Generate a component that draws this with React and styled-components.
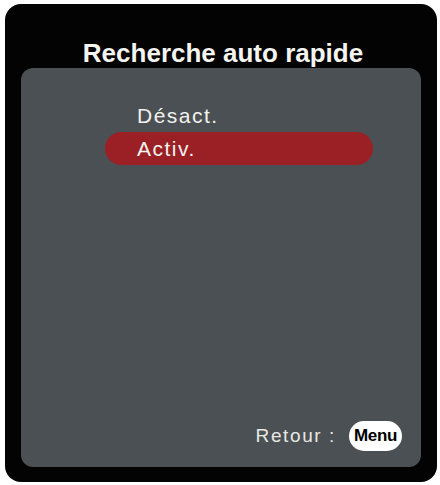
import React from 'react'
import styled, { createGlobalStyle } from 'styled-components'

const GlobalStyle = createGlobalStyle`
  html, body {
    margin: 0;
    padding: 0;
    background: #ffffff;
  }
`

const options = [
  { label: 'Désact.', selected: false },
  { label: 'Activ.', selected: true },
]

const App = () => (
  <>
    <GlobalStyle />
    <Frame>
      <Title>Recherche auto rapide</Title>
      <Panel>
        <OptionList>
          {options.map(o => (
            <Option key={o.label} selected={o.selected}>
              {o.label}
            </Option>
          ))}
        </OptionList>
        <Footer>
          <FooterLabel>Retour :</FooterLabel>
          <MenuKey>Menu</MenuKey>
        </Footer>
      </Panel>
    </Frame>
  </>
)

const Frame = styled.div`
  box-sizing: border-box;
  width: 432px;
  height: 478px;
  margin: 4px 0 0 5px;
  background: #030303;
  border-radius: 16px;
  display: flex;
  flex-direction: column;
  padding: 0 16px 15px;
`

const Title = styled.div`
  height: 64px;
  display: flex;
  align-items: flex-end;
  justify-content: center;
  box-sizing: border-box;
  padding: 0 0 2px 4px;
  color: #f4f4f0;
  font-family: 'Liberation Sans', Arial, sans-serif;
  font-weight: 700;
  font-size: 26px;
  line-height: 1;
`

const Panel = styled.div`
  flex: 1;
  background: #4a5053;
  border-radius: 12px;
  display: flex;
  flex-direction: column;
  padding: 31px 19px 16px 84px;
`

const OptionList = styled.div`
  display: flex;
  flex-direction: column;
  width: 268px;
`

const Option = styled.div`
  height: 33px;
  display: flex;
  align-items: center;
  padding-left: 32px;
  border-radius: 17px;
  background: ${p => (p.selected ? '#9a2025' : 'transparent')};
  color: #f2f2ee;
  font-family: 'Liberation Sans', Arial, sans-serif;
  font-size: 21px;
  letter-spacing: 1.5px;
`

const Footer = styled.div`
  margin-top: auto;
  display: flex;
  align-items: center;
  justify-content: flex-end;
  gap: 13px;
`

const FooterLabel = styled.span`
  color: #e8e8e4;
  font-family: 'Liberation Sans', Arial, sans-serif;
  font-size: 19px;
  letter-spacing: 1.6px;
`

const MenuKey = styled.div`
  width: 53px;
  height: 30px;
  border-radius: 15px;
  background: #ffffff;
  display: flex;
  align-items: center;
  justify-content: center;
  color: #000;
  font-family: 'Liberation Sans', Arial, sans-serif;
  font-weight: 700;
  font-size: 17px;
  letter-spacing: -0.4px;
`

export default App
